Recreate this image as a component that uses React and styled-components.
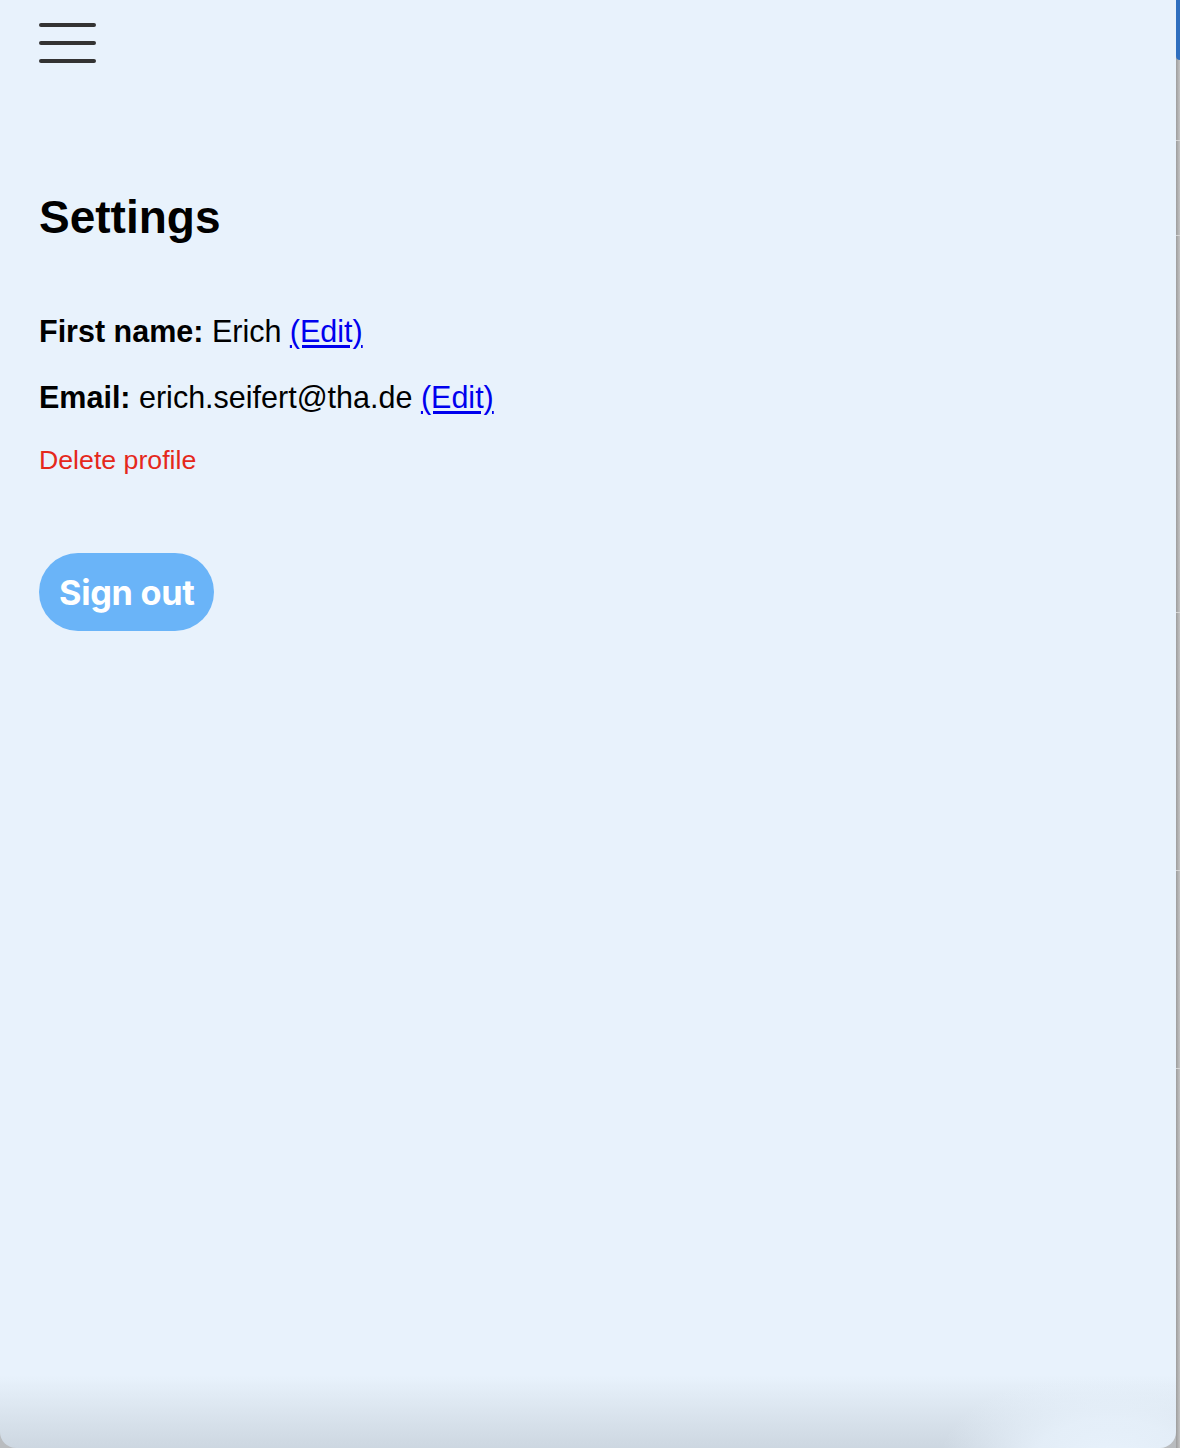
import styled, { createGlobalStyle } from "styled-components";

const Global = createGlobalStyle`
  html, body {
    margin: 0;
    padding: 0;
    background: #b9bcbf;
  }
`;

const Frame = styled.div`
  display: flex;
  height: 1448px;
  overflow: hidden;
`;

const Panel = styled.main`
  display: flex;
  flex-direction: column;
  align-items: flex-start;
  width: 1176px;
  height: 1448px;
  flex-shrink: 0;
  box-sizing: border-box;
  padding: 21px 39px 0;
  border-radius: 0 0 16px 16px;
  background-color: #e8f2fc;
  background-image:
    radial-gradient(ellipse 170px 90px at 1110px 1460px, #e8f2fc 0%, rgba(232, 242, 252, 0.8) 45%, rgba(232, 242, 252, 0) 100%),
    linear-gradient(to bottom, rgba(207, 217, 227, 0) 0%, rgba(207, 217, 227, 0) 95%, #cdd7e1 100%);
  font-family: "Liberation Sans", Arial, sans-serif;
  color: #000;
`;

const Strip = styled.aside`
  display: flex;
  flex-direction: column;
  flex: 1;
  background: linear-gradient(to right, #9d9d9d, #c4c4c4);
`;

const Tab = styled.div`
  height: 60px;
  border-radius: 0 0 0 6px;
  background: #2f6fbf;
`;

const Segment = styled.div`
  height: ${(p) => p.h}px;
  border-bottom: 1px solid #d6d6d6;
`;

const MenuButton = styled.button`
  display: block;
  padding: 0;
  border: 0;
  background: none;
  width: 57px;
  height: 44px;
  cursor: pointer;
`;

const Title = styled.h1`
  margin: 124px 0 0;
  font-size: 46px;
  line-height: 56px;
  font-weight: 700;
`;

const Fields = styled.div`
  display: flex;
  flex-direction: column;
  gap: 30px;
  margin-top: 68px;
`;

const Row = styled.p`
  margin: 0;
  font-size: 30.5px;
  line-height: 36px;
`;

const EditLink = styled.a`
  color: #0000ee;
  text-decoration: underline;
  text-underline-offset: 3px;
`;

const DeleteLink = styled.a`
  display: block;
  margin-top: 29px;
  font-size: 26.7px;
  line-height: 32px;
  color: #e5281b;
  text-decoration: none;
  cursor: pointer;
`;

const SignOut = styled.button`
  display: block;
  margin-top: 77px;
  height: 78px;
  padding: 0 20px;
  border: 0;
  border-radius: 39px;
  background: #6ab4f8;
  color: #fff;
  font-family: Inter, "Liberation Sans", sans-serif;
  font-size: 34.3px;
  font-weight: 700;
  letter-spacing: -0.3px;
  cursor: pointer;
`;

export default function App() {
  return (
    <Frame>
      <Global />
      <Panel>
        <MenuButton aria-label="Menu">
          <svg width="57" height="44" viewBox="0 0 57 44">
            <g stroke="#333" strokeWidth="4" strokeLinecap="round">
              <line x1="2" y1="4" x2="55" y2="4" />
              <line x1="2" y1="22" x2="55" y2="22" />
              <line x1="2" y1="40" x2="55" y2="40" />
            </g>
          </svg>
        </MenuButton>
        <Title>Settings</Title>
        <Fields>
          <Row>
            <b>First name:</b> Erich <EditLink href="#">(Edit)</EditLink>
          </Row>
          <Row>
            <b>Email:</b> erich.seifert@tha.de <EditLink href="#">(Edit)</EditLink>
          </Row>
        </Fields>
        <DeleteLink>Delete profile</DeleteLink>
        <SignOut>Sign out</SignOut>
      </Panel>
      <Strip>
        <Tab />
        <Segment h={80} />
        <Segment h={94} />
        <Segment h={376} />
        <Segment h={257} />
        <Segment h={197} />
      </Strip>
    </Frame>
  );
}
